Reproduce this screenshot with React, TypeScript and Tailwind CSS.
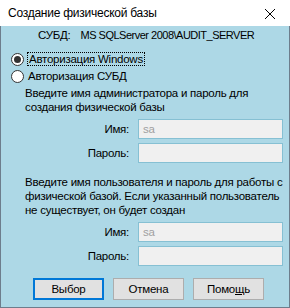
import React from 'react';

function Radio({ checked }: { checked?: boolean }) {
  return (
    <span className="w-[13px] h-[13px] rounded-full border border-[#333333] bg-white flex items-center justify-center shrink-0">
      {checked && <span className="w-[7px] h-[7px] rounded-full bg-[#333333]" />}
    </span>
  );
}

function Field({ label, value }: { label: string; value?: string }) {
  return (
    <div className="flex items-center h-[20px]">
      <span className="w-[128px] text-right">{label}</span>
      <div className="ml-[9px] w-[145px] h-[20px] border border-[#86c0d3] bg-[#f0f0f0] px-[4px] flex items-center text-[#a0a0a0]">
        {value}
      </div>
    </div>
  );
}

function Button({ label, focused }: { label: React.ReactNode; focused?: boolean }) {
  return (
    <button
      className={`w-[71px] h-[22px] bg-[#e1e1e1] flex items-center justify-center text-[#000] ${
        focused ? 'border-2 border-[#0078d7]' : 'border border-[#adadad]'
      }`}
    >
      {label}
    </button>
  );
}

export default function App() {
  return (
    <div className="w-[290px] h-[308px] flex flex-col text-[11.5px] tracking-[-0.25px] leading-[14px] text-[#000] font-['Liberation_Sans',sans-serif] select-none whitespace-nowrap">
      {/* Title bar */}
      <div className="h-[26px] bg-white flex items-center justify-between pl-[8px] pr-[14px] shrink-0">
        <span className="text-[12px]">Создание физической базы</span>
        <svg width="12" height="12" viewBox="0 0 12 12" className="mt-[1px]">
          <path d="M1 1 L11 11 M11 1 L1 11" stroke="#000" strokeWidth="1" />
        </svg>
      </div>

      {/* Body */}
      <div className="flex-1 bg-[#add8e6] border-x border-b border-[#6d7d8c] flex flex-col">
        <div className="mt-[2px] h-[14px] flex pl-[37px]">
          <span>СУБД:</span>
          <span className="ml-[10px] text-[11px] tracking-[-0.5px]">MS SQLServer 2008\AUDIT_SERVER</span>
        </div>

        <div className="mt-[10px] flex flex-col gap-[3px] pl-[10px]">
          <div className="flex items-center h-[14px]">
            <Radio checked />
            <span className="ml-[3px] px-[1px] border border-dotted border-[#000] leading-[12px]">Авторизация Windows</span>
          </div>
          <div className="flex items-center h-[14px]">
            <Radio />
            <span className="ml-[4px] leading-[12px]">Авторизация СУБД</span>
          </div>
        </div>

        <p className="mt-[3px] pl-[24px]">
          Введите имя администратора и пароль для<br />
          создания физической базы
        </p>

        <div className="mt-[5px] flex flex-col gap-[4px]">
          <Field label="Имя:" value="sa" />
          <Field label="Пароль:" />
        </div>

        <p className="mt-[12px] pl-[24px]">
          Введите имя пользователя и пароль для работы с<br />
          физической базой. Если указанный пользователь<br />
          не существует, он будет создан
        </p>

        <div className="mt-[5px] flex flex-col gap-[4px]">
          <Field label="Имя:" value="sa" />
          <Field label="Пароль:" />
        </div>

        <div className="mt-[12px] flex gap-[9px] pl-[32px]">
          <Button label="Выбор" focused />
          <Button label="Отмена" />
          <Button
            label={
              <span>
                Помо<span className="underline">щ</span>ь
              </span>
            }
          />
        </div>
      </div>
    </div>
  );
}
